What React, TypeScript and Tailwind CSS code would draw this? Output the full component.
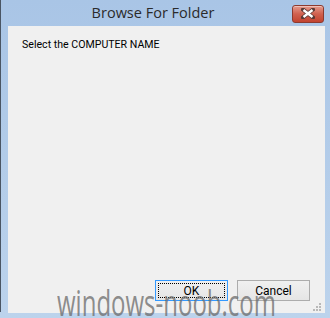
import React from "react";

function CloseButton() {
  return (
    <div className="w-[32px] h-[18px] rounded-[3px] border border-[#8d3a2f] bg-gradient-to-b from-[#e49a8d] via-[#d0604f] to-[#c2432f] flex items-center justify-center shadow-[inset_0_1px_0_rgba(255,255,255,0.4)]">
      <svg width="14" height="11" viewBox="0 0 14 11">
        <path d="M2 1.5 L12 9.5 M12 1.5 L2 9.5" stroke="#5a3a36" strokeWidth="4" strokeLinecap="square" />
        <path d="M2.5 2 L11.5 9 M11.5 2 L2.5 9" stroke="#ffffff" strokeWidth="2.4" strokeLinecap="butt" />
      </svg>
    </div>
  );
}

function DialogButton({ label, focused }: { label: string; focused?: boolean }) {
  return (
    <button
      className={
        "w-[73px] h-[21px] p-[2px] border bg-gradient-to-b from-[#f0f0f0] to-[#e5e5e5] " +
        (focused ? "border-[#3399ff]" : "border-[#acacac]")
      }
    >
      <div
        className={
          "w-full h-full flex items-center justify-center text-[12px] text-black leading-none " +
          (focused ? "border border-dotted border-black" : "")
        }
      >
        {label}
      </div>
    </button>
  );
}

function ResizeGrip() {
  const dots = [
    [6, 0],
    [3, 3],
    [6, 3],
    [0, 6],
    [3, 6],
    [6, 6],
  ];
  return (
    <svg width="9" height="9" viewBox="0 0 9 9" className="absolute right-[3px] bottom-[1px]">
      {dots.map(([x, y]) => (
        <rect key={`${x}-${y}`} x={x} y={y} width="2" height="2" fill="#b8b8b8" />
      ))}
    </svg>
  );
}

export default function App() {
  return (
    <div
      className="relative w-[330px] h-[318px] overflow-hidden bg-gradient-to-b from-[#a9c5e6] to-[#bcd3ec] flex flex-col"
      style={{ fontFamily: "Roboto, 'Liberation Sans', sans-serif" }}
    >
      <div className="absolute left-0 top-0 bottom-[6px] w-px bg-[#4a5563]" />

      <div className="h-[26px] flex items-center pl-[8px] pr-[6px]">
        <div
          className="flex-1 text-center text-[14.5px] text-[#2b2b2b] pl-[6px]"
          style={{ fontFamily: "'Open Sans', 'Liberation Sans', sans-serif" }}
        >
          Browse For Folder
        </div>
        <div className="pt-[1px]">
          <CloseButton />
        </div>
      </div>

      <div className="relative flex-1 ml-[8px] mr-[5px] mb-[5px] bg-[#f0f0f0] flex flex-col">
        <div className="pl-[14px] pt-[11px] text-[10.6px] text-black">Select the COMPUTER NAME</div>
        <div className="flex-1" />
        <div className="flex justify-end gap-[9px] pr-[15px] pb-[12px]">
          <DialogButton label="OK" focused />
          <DialogButton label="Cancel" />
        </div>
        <ResizeGrip />
      </div>

      <div
        className="absolute left-[57px] top-[284px] text-[24px] leading-none text-[#707070]/80 whitespace-nowrap pointer-events-none origin-top scale-y-150"
        style={{ fontFamily: "'Open Sans', 'Liberation Sans', sans-serif" }}
      >
        windows-noob.com
      </div>
    </div>
  );
}
